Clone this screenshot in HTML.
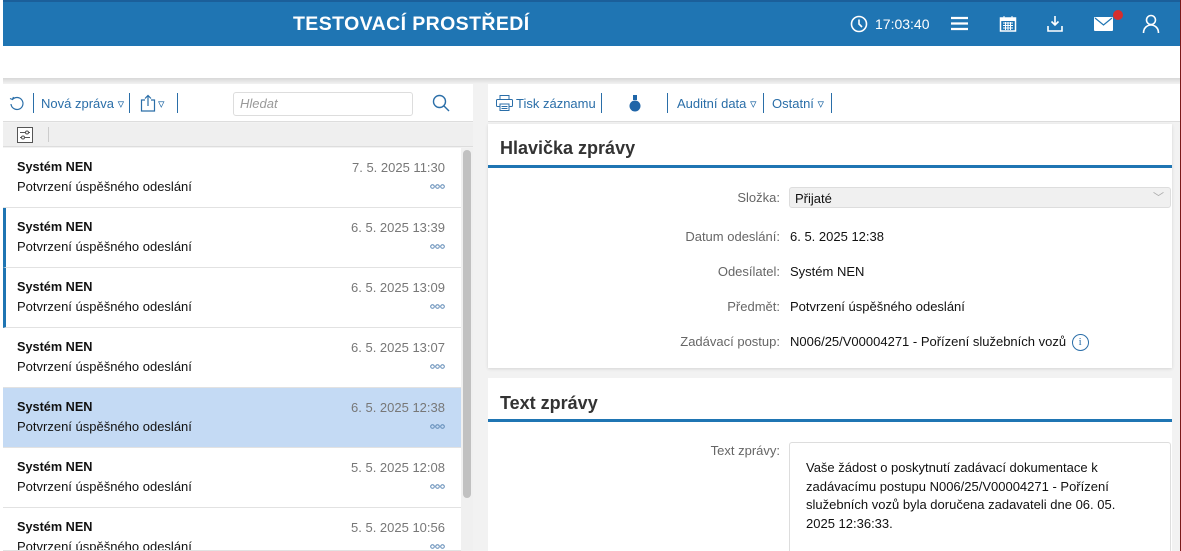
<!DOCTYPE html>
<html style="width:1181px;height:551px;overflow:hidden"><head><meta charset="utf-8"><style>
*{box-sizing:border-box;margin:0;padding:0}
body{width:1181px;height:551px;overflow:hidden;background:#fff;font-family:"Liberation Sans",sans-serif;position:relative;font-size:13px;color:#111}
.abs{position:absolute}
#hdr{left:3px;top:0;width:1177px;height:46px;background:#1f75b3;border-top:2px solid #1b5f9a}
#hdr .t{left:290px;top:11px;color:#fff;font-weight:bold;font-size:19.5px;letter-spacing:.4px}
#bg{left:3px;top:78px;width:1177px;height:473px;background:#f2f2f2}
#shadow{left:3px;top:78px;width:1177px;height:6px;background:linear-gradient(#d8d8d8,#f2f2f2)}
#rline{left:1180px;top:0;width:1px;height:551px;background:#7a1a1a}
.lp{left:3px;width:470px}
.tb{color:#2a6ea8;font-size:13px}
.sep{width:1px;height:20px;background:#2a6ea8;top:93px}
.item{left:3px;width:458px;height:60px;background:#fff;border-bottom:1px solid #e2e2e2;overflow:hidden}
.item .n{left:14px;top:12px;font-weight:bold;font-size:12.7px}
.item .s{left:14px;top:31px;font-size:13px}
.item .d{right:16px;top:12px;color:#777;font-size:13px}
.item .o{right:16px;top:36px;width:15px;height:5px}
.item.u{border-left:3px solid #1f75b3}
.item.u .n,.item.u .s{left:11px}
.lab{color:#666;font-size:13px;text-align:right;width:170px;left:610px}
.val{left:790px;font-size:13px}
</style></head><body>
<div id="hdr" class="abs"><div class="t abs">TESTOVACÍ PROSTŘEDÍ</div>
<svg class="abs" style="left:847px;top:13px" width="18" height="18" viewBox="0 0 18 18"><circle cx="9" cy="9" r="7.5" fill="none" stroke="#fff" stroke-width="1.6"/><path d="M9 4.5V9l3 3" fill="none" stroke="#fff" stroke-width="1.6"/></svg>
<div class="abs" style="left:872px;top:14px;color:#fff;font-size:14px">17:03:40</div>
<svg class="abs" style="left:948px;top:14px" width="17" height="15"><path d="M0 2h17M0 7.5h17M0 13h17" stroke="#fff" stroke-width="2.2"/></svg>
<svg class="abs" style="left:996px;top:13px" width="18" height="18" viewBox="0 0 18 18"><rect x="1.5" y="3" width="15" height="13" fill="none" stroke="#fff" stroke-width="1.5"/><rect x="1.5" y="3" width="15" height="3" fill="#fff"/><path d="M5 1v4M13 1v4M4 8h10M4 10.5h10M4 13h10M6.5 7v8M9 7v8M11.5 7v8" stroke="#fff" stroke-width="1"/></svg>
<svg class="abs" style="left:1043px;top:13px" width="18" height="18" viewBox="0 0 18 18"><path d="M9 1v9M5.5 6.5 9 10l3.5-3.5" fill="none" stroke="#fff" stroke-width="1.6"/><path d="M2 11v5h14v-5" fill="none" stroke="#fff" stroke-width="1.6"/></svg>
<svg class="abs" style="left:1091px;top:15px" width="19" height="14" viewBox="0 0 19 14"><rect width="19" height="14" rx="1" fill="#fff"/><path d="M1 1l8.5 7L18 1" fill="none" stroke="#1f75b3" stroke-width="1.2"/></svg>
<div class="abs" style="left:1110px;top:8px;width:10px;height:10px;border-radius:50%;background:#d62e2e"></div>
<svg class="abs" style="left:1139px;top:12px" width="18" height="20" viewBox="0 0 18 20"><circle cx="9" cy="6" r="4.5" fill="none" stroke="#fff" stroke-width="1.6"/><path d="M1.5 19c0-5 3.5-8 7.5-8s7.5 3 7.5 8" fill="none" stroke="#fff" stroke-width="1.6"/></svg>
</div>
<div id="bg" class="abs"></div><div id="shadow" class="abs"></div><div id="rline" class="abs"></div>

<div class="abs lp" style="top:84px;height:38px;background:#fff;border-bottom:1px solid #ddd"></div>
<svg class="abs" style="left:9px;top:95px" width="16" height="16" viewBox="0 0 16 16"><path d="M3.5 4.5A6 6 0 1 1 2 9" fill="none" stroke="#2a6ea8" stroke-width="1.2"/><path d="M1 3.5 3.5 4.5 4.5 2" fill="none" stroke="#2a6ea8" stroke-width="1.2"/></svg>
<div class="abs sep" style="left:33px"></div>
<div class="abs tb" style="left:41px;top:96px">Nová zpráva ▿</div>
<div class="abs sep" style="left:129px"></div>
<svg class="abs" style="left:140px;top:94px" width="16" height="18" viewBox="0 0 16 18"><path d="M5 6H1.5v11h13V6H11M8 12V1.5M5 4.5 8 1.5l3 3" fill="none" stroke="#2a6ea8" stroke-width="1.2"/></svg>
<div class="abs tb" style="left:158px;top:96px">▿</div>
<div class="abs sep" style="left:177px"></div>
<div class="abs" style="left:233px;top:92px;width:180px;height:24px;border:1px solid #ddd;border-radius:3px;color:#999;font-style:italic;padding:3px 6px;font-size:13px">Hledat</div>
<svg class="abs" style="left:432px;top:94px" width="18" height="18" viewBox="0 0 18 18"><circle cx="7.5" cy="7.5" r="6" fill="none" stroke="#2a6ea8" stroke-width="1.4"/><path d="M12 12l5 5" stroke="#2a6ea8" stroke-width="1.4"/></svg>
<div class="abs lp" style="top:123px;height:24px;background:#efefef;border-bottom:1px solid #ddd"></div>
<svg class="abs" style="left:17px;top:127px" width="16" height="16" viewBox="0 0 16 16"><rect x=".5" y=".5" width="15" height="15" fill="#fff" stroke="#555"/><path d="M3 5.5h10M3 10.5h10" stroke="#555"/><circle cx="10" cy="5.5" r="1.5" fill="#fff" stroke="#555"/><circle cx="6" cy="10.5" r="1.5" fill="#fff" stroke="#555"/></svg>
<div class="abs" style="left:48px;top:127px;width:1px;height:15px;background:#ccc"></div>
<div class="abs" style="left:461px;top:148px;width:12px;height:403px;background:#f0f0f0"></div>
<div class="abs" style="left:463px;top:150px;width:8px;height:348px;background:#c1c1c1;border-radius:4px"></div>

<svg width="0" height="0" style="position:absolute"><defs><g id="dots"><circle cx="2.5" cy="2.5" r="1.8" fill="none" stroke="#5d88b5"/><circle cx="7.5" cy="2.5" r="1.8" fill="none" stroke="#5d88b5"/><circle cx="12.5" cy="2.5" r="1.8" fill="none" stroke="#5d88b5"/></g></defs></svg>
<div class="abs item" style="top:148px"><div class="abs n">Systém NEN</div><div class="abs s">Potvrzení úspěšného odeslání</div><div class="abs d">7. 5. 2025 11:30</div><svg class="abs o"><use href="#dots"/></svg></div>
<div class="abs item u" style="top:208px"><div class="abs n">Systém NEN</div><div class="abs s">Potvrzení úspěšného odeslání</div><div class="abs d">6. 5. 2025 13:39</div><svg class="abs o"><use href="#dots"/></svg></div>
<div class="abs item u" style="top:268px"><div class="abs n">Systém NEN</div><div class="abs s">Potvrzení úspěšného odeslání</div><div class="abs d">6. 5. 2025 13:09</div><svg class="abs o"><use href="#dots"/></svg></div>
<div class="abs item" style="top:328px"><div class="abs n">Systém NEN</div><div class="abs s">Potvrzení úspěšného odeslání</div><div class="abs d">6. 5. 2025 13:07</div><svg class="abs o"><use href="#dots"/></svg></div>
<div class="abs item" style="top:388px;background:#c4daf4"><div class="abs n">Systém NEN</div><div class="abs s">Potvrzení úspěšného odeslání</div><div class="abs d">6. 5. 2025 12:38</div><svg class="abs o"><use href="#dots"/></svg></div>
<div class="abs item" style="top:448px"><div class="abs n">Systém NEN</div><div class="abs s">Potvrzení úspěšného odeslání</div><div class="abs d">5. 5. 2025 12:08</div><svg class="abs o"><use href="#dots"/></svg></div>
<div class="abs item" style="top:508px;height:43px"><div class="abs n">Systém NEN</div><div class="abs s">Potvrzení úspěšného odeslání</div><div class="abs d">5. 5. 2025 10:56</div><svg class="abs o"><use href="#dots"/></svg></div>

<div class="abs" style="left:488px;top:84px;width:692px;height:38px;background:#fff;border-bottom:1px solid #ddd"></div>
<svg class="abs" style="left:496px;top:95px" width="17" height="16" viewBox="0 0 17 16"><rect x="4" y=".5" width="9" height="4" fill="none" stroke="#2a6ea8"/><rect x=".5" y="4.5" width="16" height="7" rx="1" fill="none" stroke="#2a6ea8"/><rect x="4" y="9" width="9" height="6.5" fill="#fff" stroke="#2a6ea8"/><path d="M5.5 11.5h6M5.5 13.5h6" stroke="#2a6ea8"/></svg>
<div class="abs tb" style="left:516px;top:96px">Tisk záznamu</div>
<div class="abs sep" style="left:601px"></div>
<svg class="abs" style="left:628px;top:95px" width="14" height="17" viewBox="0 0 14 17"><rect x="5" y="0" width="4" height="5" fill="#1f65a8"/><circle cx="7" cy="11" r="5.5" fill="#1f65a8"/></svg>
<div class="abs sep" style="left:667px"></div>
<div class="abs tb" style="left:677px;top:96px">Auditní data ▿</div>
<div class="abs sep" style="left:763px"></div>
<div class="abs tb" style="left:772px;top:96px">Ostatní ▿</div>
<div class="abs sep" style="left:831px"></div>

<div class="abs" style="left:488px;top:124px;width:684px;height:244px;background:#fff;box-shadow:0 1px 3px rgba(0,0,0,.12)"></div>
<div class="abs" style="left:500px;top:138px;font-size:18px;font-weight:bold;color:#333">Hlavička zprávy</div>
<div class="abs" style="left:488px;top:165px;width:684px;height:3px;background:#1f75b3"></div>
<div class="abs lab" style="top:190px">Složka:</div>
<div class="abs" style="left:789px;top:187px;width:382px;height:21px;background:#f0f0f0;border:1px solid #ddd;border-radius:3px;padding:3px 5px;font-size:13px">Přijaté<span class="abs" style="right:6px;top:1px;color:#aaa;font-size:11px">﹀</span></div>
<div class="abs lab" style="top:229px">Datum odeslání:</div><div class="abs val" style="top:229px">6. 5. 2025 12:38</div>
<div class="abs lab" style="top:264px">Odesílatel:</div><div class="abs val" style="top:264px">Systém NEN</div>
<div class="abs lab" style="top:299px">Předmět:</div><div class="abs val" style="top:299px">Potvrzení úspěšného odeslání</div>
<div class="abs lab" style="top:334px">Zadávací postup:</div><div class="abs val" style="top:334px">N006/25/V00004271 - Pořízení služebních vozů <span style="display:inline-block;vertical-align:middle;margin-left:2px;width:17px;height:17px;border:1px solid #2a6ea8;border-radius:50%;color:#2a6ea8;font-size:11px;text-align:center;line-height:15px;font-family:'Liberation Serif',serif">i</span></div>

<div class="abs" style="left:488px;top:378px;width:684px;height:173px;background:#fff"></div>
<div class="abs" style="left:500px;top:393px;font-size:18px;font-weight:bold;color:#333">Text zprávy</div>
<div class="abs" style="left:488px;top:419px;width:684px;height:3px;background:#1f75b3"></div>
<div class="abs lab" style="top:443px">Text zprávy:</div>
<div class="abs" style="left:789px;top:442px;width:382px;height:109px;border:1px solid #ddd;border-bottom:none;border-radius:3px 3px 0 0;padding:16px 40px 0 16px;font-size:13px;line-height:18.7px">Vaše žádost o poskytnutí zadávací dokumentace k zadávacímu postupu N006/25/V00004271 - Pořízení služebních vozů byla doručena zadavateli dne 06. 05. 2025 12:36:33.</div>
</body></html>
